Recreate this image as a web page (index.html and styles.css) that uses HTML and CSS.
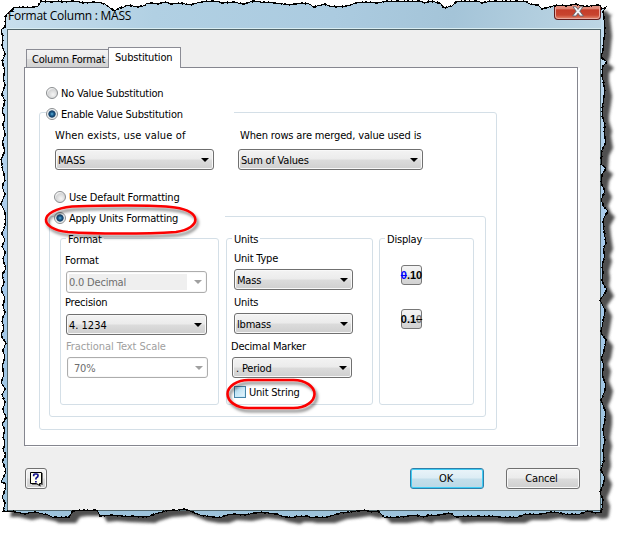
FILE: index.html
```html
<!DOCTYPE html>
<html lang="en">
<head>
<meta charset="utf-8">
<title>Format Column : MASS</title>
<link rel="stylesheet" href="styles.css">
</head>
<body>
<svg class="frame" width="623" height="533" aria-hidden="true">
  <defs>
    <linearGradient id="side" x1="0" y1="0" x2="0" y2="1">
      <stop offset="0" stop-color="#c4deef"/><stop offset=".5" stop-color="#a5c9ec"/><stop offset="1" stop-color="#9dc3db"/>
    </linearGradient>
    <filter id="soft" x="-5%" y="-5%" width="110%" height="110%"><feGaussianBlur stdDeviation="1.8"/></filter>
    <path id="edge" d="M5 17L8 13 14 8 22 7 33 7 38 6 41 1 50 2 57 1 66 2 75 1 85 3 98 2 105 4 110 8 115 11 119 8 124 7 128 5 138 7 143 6 148 3 158 4 165 2 172 4 180 3 190 5 197 3 205 1 218 1 222 3 233 2 243 4 250 2 255 1 260 2 270 2 276 3 290 5 302 3 309 4 314 7 324 4 330 6 340 7 350 5 360 2 370 2 378 3 386 1 400 1 410 1 421 1 424 3 430 1 440 3 444 8 452 6 457 1 465 1 478 1 482 3 492 1 500 1 525 1 530 4 538 5 542 9 553 6 560 5 568 6 575 4 583 6 590 6 600 5 602 9 605 8 603 12 604 20 605 30 604 40 603 50 601 57 607 62 602 67 602 75 605 90 604 98 602 110 602 115 605 125 604 130 606 142 602 150 601 164 606 168 602 175 601 183 605 191 601 200 604 207 608 211 603 220 604 230 606 243 603 250 605 255 602 265 603 272 602 280 604 285 607 290 600 300 605 310 603 322 601 333 606 340 604 352 601 358 604 365 602 375 606 385 604 393 601 400 605 410 605 418 603 432 605 440 603 450 604 460 601 470 605 478 603 485 600 492 603 500 602 508 601 512 595 513 588 511 580 514 565 514 553 512 540 514 525 514 518 517 500 517 490 516 470 516 455 517 451 513 440 515 428 515 425 517 415 515 400 517 384 517 378 511 372 512 363 510 350 512 340 513 328 517 310 517 305 516 297 516 293 518 282 516 276 514 260 512 245 515 230 514 222 517 212 517 200 515 190 511 184 509 178 510 165 511 152 515 148 517 122 516 110 515 100 516 97 510 90 510 80 510 73 511 69 517 52 517 48 515 34 512 25 514 12 511 3 511 5 503 2 497 5 490 6 484 1 482 5 474 5 468 2 461 6 455 3 450 5 443 3 436 5 430 2 424 6 418 3 410 5 402 2 395 5 389 1 382 4 375 2 366 5 358 3 350 6 343 1 336 4 328 2 320 5 313 3 305 5 298 1 290 4 282 2 275 6 268 3 260 5 252 2 246 5 240 2 234 5 226 5 212 1 204 5 194 2 187 5 180 3 171 1 160 5 150 2 142 5 135 3 125 5 118 2 110 5 102 2 94 5 86 3 78 5 70 2 62 5 54 2 46 3 37 1 30 5 27Z"/>
  </defs>
  <use href="#edge" x="7" y="6" fill="#505050" filter="url(#soft)"/>
  <use href="#edge" fill="url(#side)"/>
</svg>

<main class="window">
  <header class="titlebar">
    <h1>Format Column : MASS</h1>
    <button class="close" aria-label="Close">
      <svg width="12" height="11"><path d="M1 .8h3l2 2.600 2-2.600h3L7.800 5.200 11.400 10H8L6 7.200 4 10H.6l3.600-4.800z" fill="#f3f5f7" stroke="#62656e" stroke-width=".9"/></svg>
    </button>
  </header>
  <section class="client">
    <nav class="tabs">
      <span class="tab">Column Format</span>
      <span class="tab active">Substitution</span>
    </nav>
    <div class="panel">
      <div class="choice first"><i class="radio"></i><span>No Value Substitution</span></div>
      <div class="group outer">
        <div class="choice legend-outer"><i class="radio on"></i><span>Enable Value Substitution</span></div>
        <div class="sources">
          <div class="source-a">
            <label>When exists, use value of</label>
            <div class="select"><span>MASS</span></div>
          </div>
          <div class="source-b">
            <label>When rows are merged, value used is</label>
            <div class="select"><span>Sum of Values</span></div>
          </div>
        </div>
        <div class="choice default"><i class="radio"></i><span>Use Default Formatting</span></div>
        <div class="group inner">
          <div class="choice legend-inner"><i class="radio on"></i><span>Apply Units Formatting</span></div>
          <div class="columns">
            <div class="group format">
              <span class="legend">Format</span>
              <label>Format</label>
              <div class="select off greyed"><span>0.0 Decimal</span></div>
              <label class="precision">Precision</label>
              <div class="select value"><span>4. 1234</span></div>
              <label class="dim">Fractional Text Scale</label>
              <div class="select off scale"><span>70%</span></div>
            </div>
            <div class="group units">
              <span class="legend">Units</span>
              <label>Unit Type</label>
              <div class="select"><span>Mass</span></div>
              <label>Units</label>
              <div class="select"><span>lbmass</span></div>
              <label class="marker">Decimal Marker</label>
              <div class="select period"><span>. Period</span></div>
              <div class="choice check"><i class="box"></i><span>Unit String</span></div>
            </div>
            <div class="group display">
              <span class="legend">Display</span>
              <button class="zero"><span class="lead">0</span>.10</button>
              <button class="zero">0.1<span class="trail">0</span></button>
            </div>
          </div>
        </div>
      </div>
    </div>
    <footer>
      <button class="btn help" aria-label="Help">
        <svg width="15" height="16"><path d="M3 2h11v12h-2v2l-3-2H3z" fill="#777"/><path d="M1.500 1.500h11v11h-2v2l-3-2h-6z" fill="#fffff0" stroke="#000"/><path d="M4.700 5.200V4q0-1 1.300-1h1.600Q9 3 9 4.200v.6Q9 6 7.800 6.500 6.900 7 6.900 8v.5M6.900 10v1.500" fill="none" stroke="#10108c" stroke-width="1.700"/></svg>
      </button>
      <button class="btn ok">OK</button>
      <button class="btn cancel">Cancel</button>
    </footer>
  </section>
</main>

<svg class="overlay" width="623" height="533" aria-hidden="true">
  <defs>
    <filter id="ring" x="-10%" y="-20%" width="120%" height="160%"><feDropShadow dx="2" dy="3" stdDeviation="1.5" flood-color="#000" flood-opacity=".5"/></filter>
    <mask id="outside"><path d="M0 0H623V533H0z" fill="#fff"/><use href="#edge" fill="#000"/></mask>
  </defs>
  <path d="M0 0H602V14H0z" fill="#fff" mask="url(#outside)"/>
  <use href="#edge" fill="none" stroke="#000" stroke-width="1" shape-rendering="crispEdges"/>
  <use href="#edge" fill="none" stroke="#000" stroke-width="2" stroke-dasharray="2 3 1 4 3 5 1 2" shape-rendering="crispEdges"/>
  <g fill="none" stroke="#fb0404" stroke-width="2.600" filter="url(#ring)">
    <path d="M72 206.500C120 205 155 205 175 207.500 202 211 202 228 176 232 145 234 95 234 68 232 38 229 38 210 72 206.500Z"/>
    <rect x="227.500" y="380" width="87" height="28" rx="21" ry="14"/>
  </g>
</svg>
</body>
</html>
```
FILE: styles.css
```css
* { box-sizing: border-box; }
body {
  margin: 0;
  width: 623px;
  height: 533px;
  overflow: hidden;
  background: #fff;
  font: 11px/14px "DejaVu Sans Condensed", "DejaVu Sans", sans-serif;
  font-stretch: condensed;
  letter-spacing: -.2px;
  color: #000;
  position: relative;
}
button { font: inherit; letter-spacing: inherit; padding: 0; margin: 0; }
.frame, .overlay { position: absolute; left: 0; top: 0; }
.overlay { pointer-events: none; }
.window { position: relative; padding-left: 7px; width: 601px; }
.titlebar {
  height: 29px;
  display: flex;
  justify-content: space-between;
  background: linear-gradient(100deg, #c8dfed 0, #b1d0e3 25%, #abcbe0 55%, #a4c4d8 75%, #bdd6e4 100%);
  border-bottom: 1px solid #d9edf2;
}
.titlebar h1 {
  margin: 6px 0 0 1px;
  font: 12px/19px "Open Sans", "Noto Sans", sans-serif;
  letter-spacing: -.25px;
  white-space: nowrap;
}
.close {
  width: 47px;
  height: 17px;
  margin-top: 3px;
  border: 1px solid #601c1c;
  border-top: 0;
  border-radius: 0 0 4px 4px;
  background: linear-gradient(#e6a294 0, #dd8270 38%, #c53c29 42%, #c8442f 75%, #e58c72 100%);
  box-shadow: inset 0 0 0 1px #eaa99e;
}
.close svg { display: block; margin: 0 auto; }
.client {
  height: 482px;
  border: 1px solid #52666b;
  background: #efefef;
  padding-top: 17px;
}
.tabs { display: flex; align-items: flex-end; height: 20px; margin-left: 18px; }
.tab {
  width: 82px;
  height: 18px;
  padding: 3px 0 0 5px;
  border: 1px solid #8b8c95;
  border-width: 1px 0 0 1px;
  background: linear-gradient(#f3f3f3 0, #ebebeb 50%, #dddddd 52%, #d2d2d2 100%);
  white-space: nowrap;
}
.tab.active {
  position: relative;
  width: 73px;
  height: 21px;
  margin-bottom: -1px;
  padding-left: 6px;
  border-right-width: 1px;
  background: #fff;
}
.panel {
  width: 554px;
  height: 379px;
  margin-left: 16px;
  padding-top: 18px;
  border: 1px solid #85868f;
  background: #fff;
  box-shadow: 2px 1px 0 #fff;
}
.choice { display: flex; align-items: center; gap: 3px; height: 14px; white-space: nowrap; }
.choice span { padding-top: 2px; }
.choice.first { margin-left: 21px; }
.radio {
  width: 12px;
  height: 12px;
  border: 1px solid #8a8d90;
  border-radius: 50%;
  background: radial-gradient(circle at 60% 65%, #f5f5f5 0, #d4d5d6 55%, #fff 75%);
}
.radio.on { background: radial-gradient(circle, #5eb4dc 0, #1c5c8d 25%, #123b62 46%, #d8e0e4 56%, #fff 72%); }
.group { border: 1px solid #d4dfe7; border-radius: 3px; }
.outer { width: 458px; height: 318px; margin: 12px 0 0 14px; }
.legend-outer { width: 188px; margin: -6px 0 0 6px; background: #fff; }
label { display: block; height: 14px; line-height: 16px; white-space: nowrap; }
.sources { display: flex; gap: 24px; margin: 7px 0 0 15px; }
.sources label { margin-bottom: 7px; }
.source-a { width: 159px; }
.source-a label { letter-spacing: .15px; }
.source-b { width: 185px; }
.source-b label { padding-left: 2px; letter-spacing: -.15px; }
.select {
  display: flex;
  align-items: center;
  justify-content: space-between;
  height: 21px;
  padding: 2px 4px 0 2px;
  border: 1px solid #707070;
  border-radius: 3px;
  background: linear-gradient(#f3f3f3 0, #ebebeb 49%, #dcdcdc 51%, #cfcfcf 100%);
  box-shadow: inset 0 0 0 1px #f8f8f8;
  white-space: nowrap;
}
.select::after { content: ""; margin-top: -1px; border: 4px solid transparent; border-top-color: #000; border-bottom: 0; }
.select.off { background: #fff; border-color: #adadad; color: #6d6d6d; }
.select.off::after { border-top-color: #a0a0a0; }
.default { margin: 20px 0 0 14px; }
.inner { width: 437px; height: 201px; margin: 12px 0 0 9px; }
.legend-inner { width: 171px; margin: -6px 0 0 4px; background: #fff; }
.columns { display: flex; height: 167px; margin: 13px 0 0 10px; }
.legend { display: block; width: max-content; height: 14px; line-height: 16px; margin: -7px 0 0 5px; padding: 0 2px; background: #fff; }
.format { width: 159px; }
.format label { margin: 7px 0 4px 4px; }
.format .select { width: 141px; margin-left: 5px; }
.format .select.greyed { height: 22px; padding: 0 4px 0 2px; }
.greyed span { width: 118px; height: 16px; line-height: 17px; background: #efefef; }
.format .precision { margin: 2px 0 5px 4px; }
.format .dim { margin: 4px 0 4px 5px; color: #a0a0a0; letter-spacing: -.05px; }
.format .scale { margin-left: 6px; padding-left: 6px; }
.value { letter-spacing: 0; }
.units { width: 147px; margin-left: 7px; }
.units label { margin: 5px 0 4px 7px; }
.units .select { width: 119px; margin-left: 7px; }
.units .marker { margin-left: 4px; }
.units .period { width: 120px; margin-left: 5px; padding-left: 3px; }
.check { margin: 7px 0 0 7px; }
.box { width: 12px; height: 12px; border: 1px solid #4585a8; background: linear-gradient(135deg, #a9d8ef, #e8f5fb); box-shadow: inset 0 0 0 1px #c8eafa; }
.display { width: 95px; margin-left: 6px; }
.zero {
  display: flex;
  align-items: center;
  justify-content: center;
  width: 21px;
  height: 20px;
  margin: 19px 0 0 21px;
  border: 1px solid #777;
  border-radius: 3px;
  background: linear-gradient(#f3f3f3 0, #ebebeb 49%, #dcdcdc 51%, #d2d2d2 100%);
  font: bold 11px/12px "Liberation Sans", sans-serif;
  letter-spacing: 0;
}
.zero + .zero { margin-top: 24px; }
.lead { color: #00f; text-decoration: line-through; }
.trail { color: #777; text-decoration: line-through #000; }
footer { display: flex; margin: 22px 0 0 17px; }
.btn {
  width: 74px;
  height: 21px;
  border: 1px solid #707070;
  border-radius: 3px;
  background: linear-gradient(#f3f3f3 0, #ebebeb 49%, #dcdcdc 51%, #cfcfcf 100%);
  box-shadow: inset 0 0 0 1px #f8f8f8;
}
.help { width: 22px; }
.help svg { display: block; margin: 1px auto 0; }
.ok { margin-left: 363px; padding: 1px 2px 0 0; border-color: #2f7fa9; background: linear-gradient(#eaf4f9 0, #dcecf4 49%, #c4dfeb 51%, #bbd8e6 100%); box-shadow: inset 0 0 0 1px #40cdf5; }
.cancel { margin-left: 22px; padding: 1px 3px 0 0; }
```
